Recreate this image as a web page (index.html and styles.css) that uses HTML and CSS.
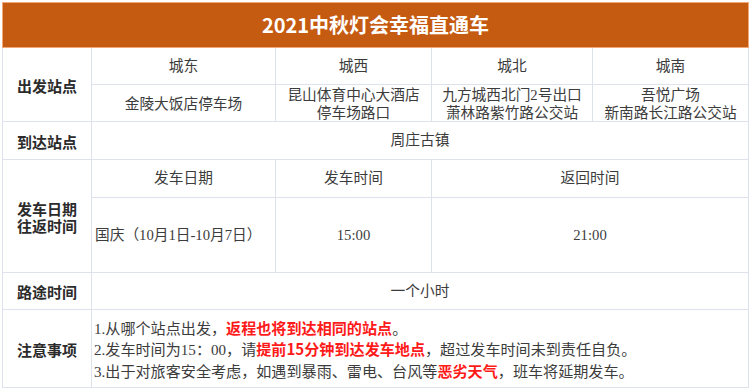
FILE: index.html
```html
<!DOCTYPE html>
<html lang="zh-CN">
<head>
<meta charset="utf-8">
<title>2021中秋灯会幸福直通车</title>
<link rel="stylesheet" href="styles.css">
</head>
<body>
<table class="sheet">
  <colgroup>
    <col class="c-label">
    <col class="c-east">
    <col class="c-west">
    <col class="c-north">
    <col class="c-south">
  </colgroup>
  <tr>
    <td colspan="5" class="title"><div class="cell h-title">2021中秋灯会幸福直通车</div></td>
  </tr>
  <tr>
    <td rowspan="2" class="label"><div class="cell h-sub2">出发站点</div></td>
    <td><div class="cell h-sub">城东</div></td>
    <td><div class="cell h-sub">城西</div></td>
    <td><div class="cell h-sub">城北</div></td>
    <td><div class="cell h-sub">城南</div></td>
  </tr>
  <tr>
    <td><div class="cell h-sub stop"><span class="ln">金陵大饭店停车场</span></div></td>
    <td><div class="cell h-sub stop"><span class="ln">昆山体育中心大酒店</span><span class="ln">停车场路口</span></div></td>
    <td><div class="cell h-sub stop"><span class="ln">九方城西北门2号出口</span><span class="ln">萧林路紫竹路公交站</span></div></td>
    <td><div class="cell h-sub stop"><span class="ln">吾悦广场</span><span class="ln">新南路长江路公交站</span></div></td>
  </tr>
  <tr>
    <td class="label"><div class="cell h-arrive">到达站点</div></td>
    <td colspan="4"><div class="cell h-arrive">周庄古镇</div></td>
  </tr>
  <tr>
    <td rowspan="2" class="label"><div class="cell h-date2"><span class="ln">发车日期</span><span class="ln">往返时间</span></div></td>
    <td><div class="cell h-head">发车日期</div></td>
    <td><div class="cell h-head">发车时间</div></td>
    <td colspan="2"><div class="cell h-head">返回时间</div></td>
  </tr>
  <tr>
    <td><div class="cell h-time left">国庆（10月1日-10月7日）</div></td>
    <td><div class="cell h-time">15:00</div></td>
    <td colspan="2"><div class="cell h-time">21:00</div></td>
  </tr>
  <tr>
    <td class="label"><div class="cell h-dur">路途时间</div></td>
    <td colspan="4"><div class="cell h-dur">一个小时</div></td>
  </tr>
  <tr>
    <td class="label"><div class="cell h-notes">注意事项</div></td>
    <td colspan="4"><div class="cell h-notes notes"><span class="ln">1.从哪个站点出发，<b class="hl">返程也将到达相同的站点</b>。</span><span class="ln">2.发车时间为15：00，请<b class="hl">提前15分钟到达发车地点</b>，超过发车时间未到责任自负。</span><span class="ln">3.出于对旅客安全考虑，如遇到暴雨、雷电、台风等<b class="hl">恶劣天气</b>，班车将延期发车。</span></div></td>
  </tr>
</table>
</body>
</html>
```
FILE: styles.css
```css
html, body {
  margin: 0;
  padding: 0;
  background: #ffffff;
}
body {
  padding: 2px 0 0 2px;
  font-family: "Liberation Serif", "Noto Sans CJK SC", serif;
  color: #3c3c3c;
}
.sheet {
  border-collapse: collapse;
  table-layout: fixed;
  width: 746px;
  font-size: 14.7px;
  line-height: 17.5px;
}
.c-label { width: 89px; }
.c-east { width: 184px; }
.c-west { width: 156px; }
.c-north { width: 161px; }
.c-south { width: 156px; }
.sheet td {
  border: 1px solid #dde2ec;
  padding: 0;
  vertical-align: top;
}
.cell {
  box-sizing: border-box;
  display: flex;
  flex-direction: column;
  align-items: center;
  justify-content: center;
  padding-top: 1px;
  overflow: hidden;
  white-space: nowrap;
  text-align: center;
}
.ln { display: block; }
.h-title { height: 44px; padding-top: 0; }
.h-sub { height: 36px; }
.h-sub2 { height: 73px; }
.h-arrive { height: 37px; }
.h-head { height: 37px; }
.h-time { height: 74px; }
.h-date2 { height: 112px; }
.h-dur { height: 36px; }
.h-notes { height: 77px; padding-top: 3px; }
.stop { padding-top: 3px; }
.sheet td.title {
  background: #c55a11;
  border-color: #f0a878;
}
.title .cell {
  color: #ffffff;
  font-family: "Noto Sans CJK SC", sans-serif;
  font-weight: 700;
  font-size: 20px;
  line-height: 24px;
}
.label .cell {
  font-family: "Noto Sans CJK SC", sans-serif;
  font-weight: 700;
  font-size: 15px;
  color: #2b2b2b;
  padding-top: 2px;
}
.left {
  align-items: flex-start;
  padding-left: 3px;
}
.notes {
  align-items: flex-start;
  padding-left: 2px;
  font-size: 15.1px;
  line-height: 19.3px;
  text-align: left;
}
.hl {
  color: #ff1a1a;
  font-family: "Noto Sans CJK SC", sans-serif;
  font-weight: 700;
}
```
